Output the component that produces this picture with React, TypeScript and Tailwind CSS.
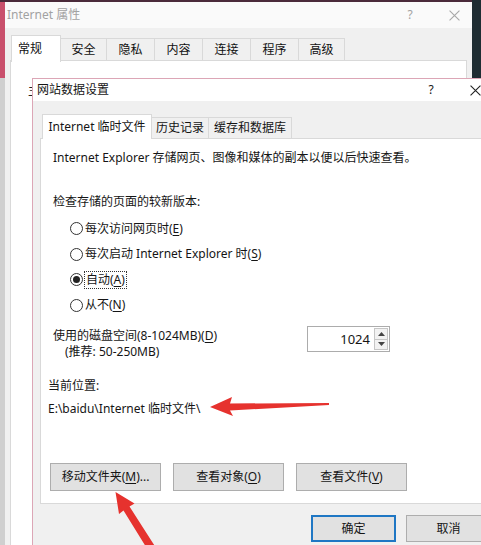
import React from "react";

function XIcon({ color = "#111", size = 10 }: { color?: string; size?: number }) {
  return (
    <svg width={size} height={size} viewBox="0 0 10 10">
      <path d="M0.5 0.5 L9.5 9.5 M9.5 0.5 L0.5 9.5" stroke={color} strokeWidth="1" fill="none" />
    </svg>
  );
}

function Radio({ checked }: { checked?: boolean }) {
  return (
    <span className="w-[13px] h-[13px] rounded-full border border-[#333] bg-white flex items-center justify-center shrink-0">
      {checked && <span className="w-[7px] h-[7px] rounded-full bg-[#222]" />}
    </span>
  );
}

function U({ children }: { children: React.ReactNode }) {
  return <span className="underline underline-offset-2">{children}</span>;
}

export default function App() {
  return (
    <div className="relative w-[481px] h-[545px] overflow-hidden bg-[#cfcfcf] font-['Noto_Sans','Noto_Sans_CJK_SC',sans-serif] text-[12px] leading-[16px] text-[#151515]">
      {/* desktop edges */}
      <div className="absolute left-0 top-0 w-[6px] h-[78px] bg-[#c9506c]" />
      <div className="absolute left-0 top-0 w-[481px] h-[2px] bg-[#4a2a3a]" />

      {/* background window: Internet 属性 */}
      <div className="absolute left-[5px] top-[2px] w-[467px] h-[560px] bg-[#f0f0f0] flex flex-col overflow-hidden">
        <div className="h-[26px] bg-[#fafafa] flex items-center pl-[2px] text-[#a2a2a2] shrink-0">
          <span>Internet 属性</span>
          <span className="ml-auto w-[54px] text-center">?</span>
          <span className="w-[35px] flex justify-center">
            <XIcon color="#a8a8a8" size={11} />
          </span>
        </div>
        <div className="flex items-end h-[32px] pl-[6px] shrink-0 text-[#111]">
          <div className="w-[50px] h-[27px] bg-white border border-b-0 border-[#d9d9d9] flex items-center pl-[6px] relative top-[2px] z-10">常规</div>
          {[
            ["安全", "w-[46px]"],
            ["隐私", "w-[48px]"],
            ["内容", "w-[48px]"],
            ["连接", "w-[48px]"],
            ["程序", "w-[48px]"],
            ["高级", "w-[46px]"],
          ].map(([t, w]) => (
            <div key={t} className={`${w} h-[22px] bg-[#f0f0f0] border border-b-0 border-l-0 border-[#d9d9d9] flex items-center justify-center`}>
              {t}
            </div>
          ))}
        </div>
        <div className="mx-[5px] flex-1 bg-white border border-[#d9d9d9] relative">
          <div className="absolute left-[17px] top-[22px] w-[6px] h-[16px] overflow-hidden text-[#222]">
            <span className="block w-[12px]">主</span>
          </div>
        </div>
      </div>
      <div className="absolute right-0 top-0 w-[9px] h-[78px] bg-[#1f2d33]" />

      {/* foreground dialog: 网站数据设置 */}
      <div className="absolute left-[32px] top-[78px] w-[470px] h-[480px] border border-[#dca6b6] bg-[#f0f0f0] flex flex-col">
        <div className="h-[22px] bg-white flex items-center pl-[4px] pr-[4px] shrink-0">
          <span>网站数据设置</span>
          <span className="ml-auto w-[44px] text-center">?</span>
          <span className="w-[44px] flex justify-center">
            <XIcon color="#222" size={11} />
          </span>
        </div>

        <div className="flex items-end h-[37px] pl-[9px] shrink-0">
          <div className="w-[110px] h-[25px] bg-white border border-b-0 border-[#d9d9d9] flex items-center justify-center relative top-[1px] z-10">
            Internet 临时文件
          </div>
          <div className="w-[57px] h-[21px] border border-b-0 border-l-0 border-[#d9d9d9] flex items-center justify-center">历史记录</div>
          <div className="w-[83px] h-[21px] border border-b-0 border-l-0 border-[#d9d9d9] flex items-center justify-center">缓存和数据库</div>
        </div>

        <div className="mx-[7px] h-[366px] bg-white border border-[#d9d9d9] flex flex-col shrink-0">
          <div className="mt-[11px] pl-[12px]">Internet Explorer 存储网页、图像和媒体的副本以便以后快速查看。</div>
          <div className="mt-[28px] pl-[12px]">检查存储的页面的较新版本:</div>
          <div className="mt-[6px] pl-[29px] flex flex-col">
            <div className="h-[25.5px] flex items-center gap-[2px]">
              <Radio />
              <span>每次访问网页时(<U>E</U>)</span>
            </div>
            <div className="h-[25.5px] flex items-center gap-[2px]">
              <Radio />
              <span>每次启动 Internet Explorer 时(<U>S</U>)</span>
            </div>
            <div className="h-[25.5px] flex items-center gap-[1px]">
              <Radio checked />
              <span className="border border-dotted border-[#333] px-[1px] leading-[16px]">自动(<U>A</U>)</span>
            </div>
            <div className="h-[25.5px] flex items-center gap-[2px]">
              <Radio />
              <span>从不(<U>N</U>)</span>
            </div>
          </div>

          <div className="mt-[8px] flex items-start">
            <div className="w-[266px] pl-[12px] mt-[2px] flex flex-col">
              <span>使用的磁盘空间(8-1024MB)(<U>D</U>)</span>
              <span className="pl-[12px]">(推荐: 50-250MB)</span>
            </div>
            <div className="w-[83px] h-[26px] border border-[#acacac] bg-white flex">
              <div className="flex-1 flex items-center justify-end pr-[4px] text-[13px]">1024</div>
              <div className="w-[14px] flex flex-col my-[1px] mr-[1px]">
                <div className="flex-1 border border-[#c6c6c6] bg-[#f2f2f2] flex items-center justify-center">
                  <svg width="7" height="4" viewBox="0 0 7 4"><path d="M3.5 0 L7 4 L0 4 Z" fill="#444" /></svg>
                </div>
                <div className="flex-1 border border-t-0 border-[#c6c6c6] bg-[#f2f2f2] flex items-center justify-center">
                  <svg width="7" height="4" viewBox="0 0 7 4"><path d="M0 0 L7 0 L3.5 4 Z" fill="#444" /></svg>
                </div>
              </div>
            </div>
          </div>

          <div className="mt-[18px] pl-[7px]">当前位置:</div>
          <div className="mt-[7px] pl-[7px]">E:\baidu\Internet 临时文件\</div>

          <div className="mt-[46px] pl-[9px] flex gap-[12px]">
            <button className="w-[111px] h-[28px] bg-[#e1e1e1] border border-[#adadad] flex items-center justify-center">
              移动文件夹(<U>M</U>)...
            </button>
            <button className="w-[111px] h-[28px] bg-[#e1e1e1] border border-[#adadad] flex items-center justify-center">
              查看对象(<U>O</U>)
            </button>
            <button className="w-[111px] h-[28px] bg-[#e1e1e1] border border-[#adadad] flex items-center justify-center">
              查看文件(<U>V</U>)
            </button>
          </div>
        </div>

        <div className="mt-[11px] flex justify-end gap-[10px] pr-[10px]">
          <button className="w-[85px] h-[27px] bg-[#e1e1e1] border-2 border-[#1f77c4] flex items-center justify-center">确定</button>
          <button className="w-[85px] h-[27px] bg-[#e1e1e1] border border-[#adadad] flex items-center justify-center">取消</button>
        </div>
      </div>

      {/* red annotation arrows */}
      <svg className="absolute left-0 top-0 pointer-events-none" width="481" height="545" viewBox="0 0 481 545">
        <path d="M210 407 L232 397 L230 403.5 L329 403 L329 405 L230 410.5 L233 416 Z" fill="#e6322e" />
        <path d="M115.5 492 L134.5 503.5 L129.5 506.5 L158 551 L151 555 L123.5 510.5 L119 514 Z" fill="#e6322e" />
      </svg>
    </div>
  );
}
